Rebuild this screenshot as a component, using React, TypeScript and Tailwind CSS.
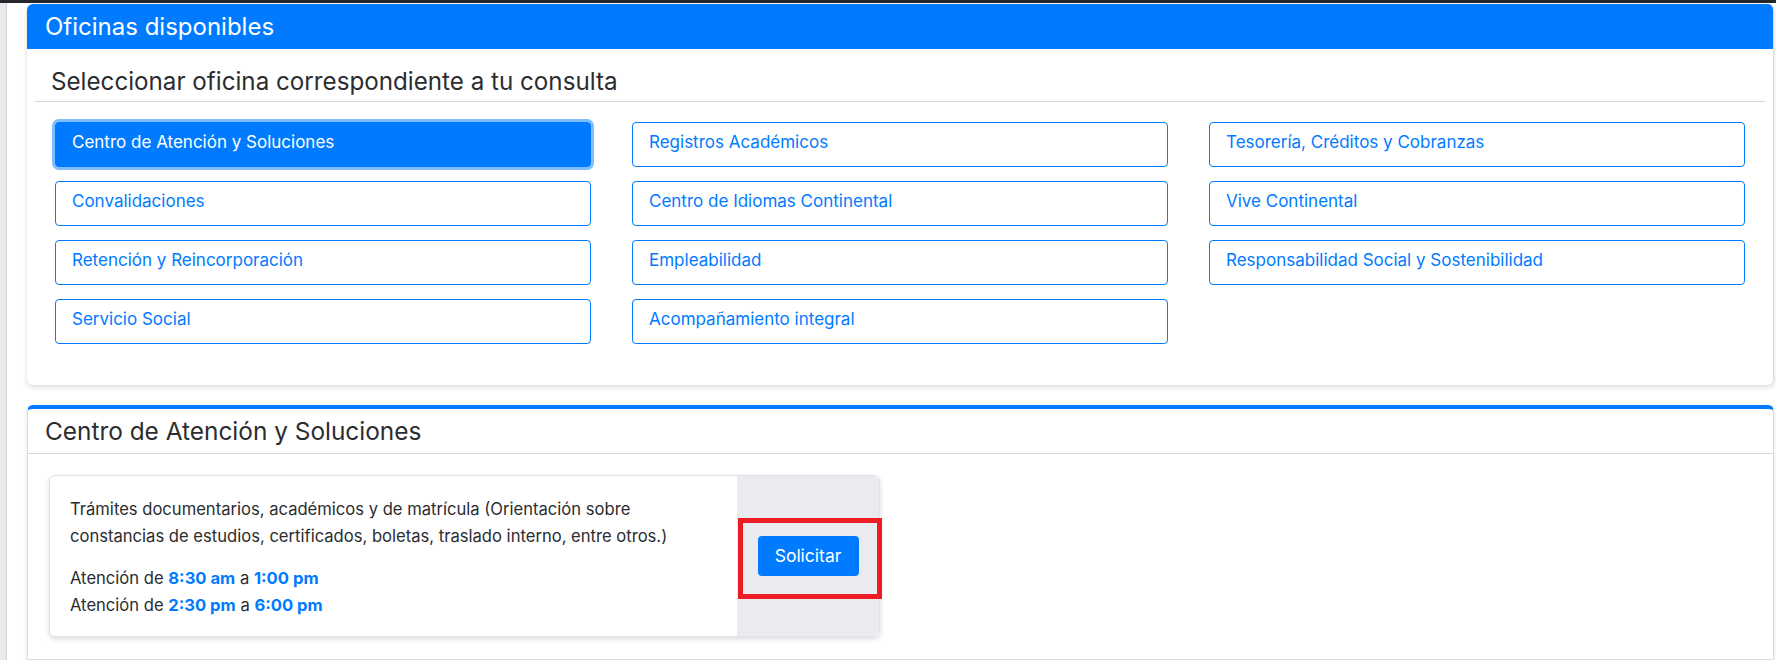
import React from "react";

const offices = [
  "Centro de Atención y Soluciones",
  "Registros Académicos",
  "Tesorería, Créditos y Cobranzas",
  "Convalidaciones",
  "Centro de Idiomas Continental",
  "Vive Continental",
  "Retención y Reincorporación",
  "Empleabilidad",
  "Responsabilidad Social y Sostenibilidad",
  "Servicio Social",
  "Acompañamiento integral",
];

export default function App() {
  return (
    <div
      className="w-[1776px] h-[660px] bg-white overflow-hidden flex flex-col text-[#212529]"
      style={{ fontFamily: "Inter, 'Noto Sans', sans-serif" }}
    >
      <div className="h-[3px] bg-[#25272b] shrink-0" />
      <div className="flex flex-1 min-h-0">
        <div className="w-[7px] bg-[#e8eaed] border-r border-[#d3d5d9] shrink-0" />
        <div className="flex-1 pl-[20px] pr-[2px] pt-[1px] flex flex-col">
          {/* Card 1 */}
          <div className="rounded-[6px] bg-white border-r border-[#d9dce0] shadow-[0_2px_5px_rgba(0,0,0,0.15)] overflow-hidden">
            <div className="h-[45px] bg-[#007bff] flex items-center pl-[18px] text-white text-[24px]">
              Oficinas disponibles
            </div>
            <div className="px-[8px] pb-[41px]">
              <div className="pt-[18px] pb-[5px] pl-[16px] text-[24.2px] leading-[29px] text-[#2b2d30] border-b border-[#d4d6da]">
                Seleccionar oficina correspondiente a tu consulta
              </div>
              <div className="mt-[20px] px-[20px] grid grid-cols-3 gap-x-[41px] gap-y-[14px]">
                {offices.map((o, i) => (
                  <div
                    key={o}
                    className={
                      i === 0
                        ? "h-[45px] rounded-[4px] border border-[#007bff] bg-[#007bff] text-white pl-[16px] pb-[3px] flex items-center text-[17px] shadow-[0_0_0_3px_rgba(0,123,255,0.5)]"
                        : "h-[45px] rounded-[4px] border border-[#007bff] bg-white text-[#007bff] pl-[16px] pb-[3px] flex items-center text-[17px]"
                    }
                  >
                    {o}
                  </div>
                ))}
              </div>
            </div>
          </div>

          {/* Card 2 */}
          <div className="mt-[20px] flex-1 rounded-t-[6px] bg-white border-t-[4px] border-t-[#007bff] border-x border-x-[#d9dce0] border-b border-b-[#d9dce0] shadow-[0_2px_5px_rgba(0,0,0,0.1)]">
            <div className="h-[45px] flex items-center pl-[17px] text-[24.4px] text-[#2b2d30] border-b border-[#d4d6da]">
              Centro de Atención y Soluciones
            </div>
            <div className="pt-[21px] pl-[21px]">
              <div className="w-[831px] h-[162px] flex rounded-[6px] border border-[#dfe2e6] shadow-[0_2px_5px_rgba(0,0,0,0.15)] overflow-visible">
                <div className="flex-1 pl-[20px] pt-[20px] text-[16.6px] leading-[27px] text-[#2b2d30]">
                  <p>
                    Trámites documentarios, académicos y de matrícula (Orientación sobre
                    <br />
                    constancias de estudios, certificados, boletas, traslado interno, entre otros.)
                  </p>
                  <p className="mt-[15px]">
                    Atención de <b className="text-[#007bff] font-bold">8:30 am</b> a{" "}
                    <b className="text-[#007bff] font-bold">1:00 pm</b>
                    <br />
                    Atención de <b className="text-[#007bff] font-bold">2:30 pm</b> a{" "}
                    <b className="text-[#007bff] font-bold">6:00 pm</b>
                  </p>
                </div>
                <div className="w-[142px] bg-[#e9ebee] rounded-r-[6px] relative flex items-center justify-center">
                  <div className="w-[101px] h-[40px] rounded-[4px] bg-[#007bff] text-white text-[17.5px] flex items-center justify-center">
                    Solicitar
                  </div>
                  <div className="absolute left-[1px] top-[42px] w-[144px] h-[81px] border-[5px] border-[#ec1c24]" />
                </div>
              </div>
            </div>
          </div>
        </div>
      </div>
    </div>
  );
}
